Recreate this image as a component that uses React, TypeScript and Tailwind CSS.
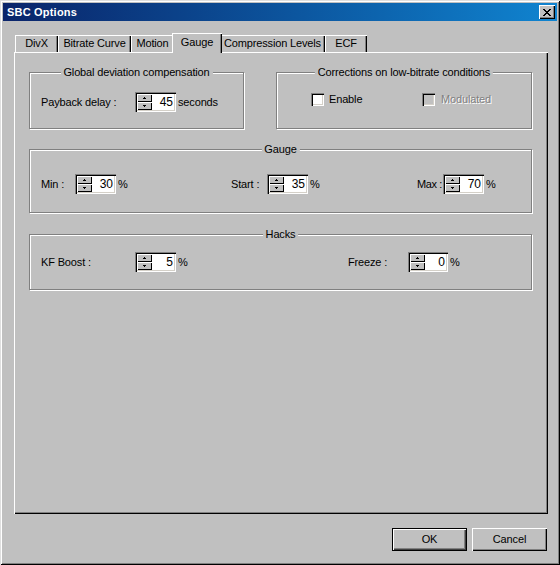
import React from 'react';

const face = "font-['Liberation_Sans',Arial,sans-serif]";

const xRows = ['11000011', '01100110', '00111100', '00011000', '00111100', '01100110', '11000011'];

function CloseGlyph() {
  return (
    <svg width="8" height="7" viewBox="0 0 8 7" shapeRendering="crispEdges" className="block">
      {xRows.map((row, y) =>
        row.split('').map((c, x) => (c === '1' ? <rect key={`${x}-${y}`} x={x} y={y} width="1" height="1" fill="#000" /> : null))
      )}
    </svg>
  );
}

function Arrow({ up }: { up?: boolean }) {
  return (
    <svg width="3" height="2" viewBox="0 0 3 2" shapeRendering="crispEdges" className="block">
      {up ? (
        <>
          <rect x="1" y="0" width="1" height="1" fill="#000" />
          <rect x="0" y="1" width="3" height="1" fill="#000" />
        </>
      ) : (
        <>
          <rect x="0" y="0" width="3" height="1" fill="#000" />
          <rect x="1" y="1" width="1" height="1" fill="#000" />
        </>
      )}
    </svg>
  );
}

function SpinButton({ up }: { up?: boolean }) {
  return (
    <div className="flex h-[8px] items-center justify-center bg-[#c0c0c0] shadow-[inset_1px_1px_0_#fff,inset_-1px_-1px_0_#000]">
      <Arrow up={up} />
    </div>
  );
}

function Spin({ value, narrow }: { value: string; narrow?: boolean }) {
  return (
    <div
      className={`flex h-[20px] shrink-0 ${narrow ? 'w-[40px]' : 'w-[41px]'} bg-white p-[2px] shadow-[inset_1px_1px_0_#808080,inset_2px_2px_0_#000,inset_-1px_-1px_0_#fff,inset_-2px_-2px_0_#d4d0c8]`}
    >
      <div className="flex w-[15px] flex-col">
        <SpinButton up />
        <SpinButton />
      </div>
      <div className="flex-1 pr-[1px] text-right text-[12px] leading-[16px] tracking-normal">{value}</div>
    </div>
  );
}

function Check({ disabled }: { disabled?: boolean }) {
  return (
    <div
      className={`h-[13px] w-[13px] shrink-0 ${disabled ? 'bg-[#c0c0c0]' : 'bg-white'} shadow-[inset_1px_1px_0_#808080,inset_2px_2px_0_#000,inset_-1px_-1px_0_#fff,inset_-2px_-2px_0_#d4d0c8]`}
    />
  );
}

function Group({ title, className, children }: { title: string; className: string; children: React.ReactNode }) {
  return (
    <div className={`relative border border-[#808080] shadow-[inset_1px_1px_0_#fff,1px_1px_0_#fff] ${className}`}>
      <span className="absolute left-1/2 top-[-7px] -translate-x-1/2 whitespace-nowrap bg-[#c0c0c0] px-[3px] leading-[13px]">
        {title}
      </span>
      {children}
    </div>
  );
}

const tabs = [
  { label: 'DivX', w: 'w-[43px]' },
  { label: 'Bitrate Curve', w: 'w-[73px]' },
  { label: 'Motion', w: 'w-[43px]' },
  { label: 'Gauge', w: 'w-[50px]', active: true },
  { label: 'Compression Levels', w: 'w-[105px]' },
  { label: 'ECF', w: 'w-[42px]' },
];

export default function App() {
  return (
    <div
      className={`${face} h-[565px] w-[560px] bg-[#c0c0c0] pt-[3px] text-[11px] tracking-[-0.15px] text-black shadow-[inset_1px_1px_0_#dfdfdf,inset_-1px_-1px_0_#000,inset_2px_2px_0_#fff,inset_-2px_-2px_0_#808080]`}
    >
      {/* Title bar */}
      <div className="mx-[3px] flex h-[18px] items-center bg-linear-to-r from-[#0a246a] to-[#1084d0] pl-[4px] pr-[2px]">
        <span className="text-[11px] font-bold tracking-[0.2px] text-white">SBC Options</span>
        <div className="ml-auto flex h-[14px] w-[16px] items-center justify-center bg-[#c0c0c0] shadow-[inset_1px_1px_0_#fff,inset_-1px_-1px_0_#000,inset_-2px_-2px_0_#808080]">
          <CloseGlyph />
        </div>
      </div>

      {/* Tabs */}
      <div className="ml-[15px] mt-[12px] flex h-[19px] items-end whitespace-nowrap">
        {tabs.map((t) =>
          t.active ? (
            <div
              key={t.label}
              className={`relative z-10 -mx-[2px] mb-[-1px] flex h-[20px] ${t.w} items-center justify-center bg-[#c0c0c0] pb-[1px] shadow-[inset_1px_0_0_#fff,inset_0_1px_0_#fff,inset_-1px_0_0_#000,inset_-2px_0_0_#808080]`}
            >
              {t.label}
            </div>
          ) : (
            <div
              key={t.label}
              className={`flex h-[17px] ${t.w} items-center justify-center leading-[13px] shadow-[inset_1px_0_0_#fff,inset_0_1px_0_#fff,inset_-1px_0_0_#000,inset_-2px_0_0_#808080]`}
            >
              {t.label}
            </div>
          )
        )}
      </div>

      {/* Tab panel */}
      <div className="ml-[14px] h-[462px] w-[534px] whitespace-nowrap pl-[15px] pt-[20px] shadow-[inset_1px_1px_0_#fff,inset_-1px_-1px_0_#000,inset_-2px_-2px_0_#808080]">
        <div className="flex gap-[32px]">
          <Group title="Global deviation compensation" className="h-[57px] w-[215px] pl-[11px] pt-[19px]">
            <div className="flex h-[20px] items-center">
              <span className="w-[94px] shrink-0">Payback delay :</span>
              <Spin value="45" />
              <span className="ml-[2px]">seconds</span>
            </div>
          </Group>
          <Group title="Corrections on low-bitrate conditions" className="h-[57px] w-[256px] pl-[34px] pt-[20px]">
            <div className="flex h-[13px] items-center">
              <div className="flex w-[111px] items-center">
                <Check />
                <span className="ml-[5px]">Enable</span>
              </div>
              <div className="flex items-center">
                <Check disabled />
                <span className="ml-[6px] text-[#808080] [text-shadow:1px_1px_0_#fff]">Modulated</span>
              </div>
            </div>
          </Group>
        </div>

        <Group title="Gauge" className="mt-[20px] h-[64px] w-[503px] pl-[11px] pt-[24px]">
          <div className="flex h-[20px] items-center">
            <div className="flex w-[190px] items-center">
              <span className="w-[34px] shrink-0">Min :</span>
              <Spin value="30" />
              <span className="ml-[2px]">%</span>
            </div>
            <div className="flex w-[186px] items-center">
              <span className="w-[36px] shrink-0">Start :</span>
              <Spin value="35" />
              <span className="ml-[2px]">%</span>
            </div>
            <div className="flex items-center">
              <span className="w-[26px] shrink-0 tracking-[-0.4px]">Max :</span>
              <Spin value="70" />
              <span className="ml-[2px]">%</span>
            </div>
          </div>
        </Group>

        <Group title="Hacks" className="mt-[21px] h-[56px] w-[503px] pl-[11px] pt-[17px]">
          <div className="flex h-[20px] items-center">
            <div className="flex w-[307px] items-center">
              <span className="w-[94px] shrink-0">KF Boost :</span>
              <Spin value="5" />
              <span className="ml-[2px]">%</span>
            </div>
            <div className="flex items-center">
              <span className="w-[60px] shrink-0">Freeze :</span>
              <Spin value="0" narrow />
              <span className="ml-[2px]">%</span>
            </div>
          </div>
        </Group>
      </div>

      {/* Buttons */}
      <div className="mt-[14px] flex justify-end gap-[5px] pr-[13px]">
        <button className="flex h-[23px] w-[75px] items-center justify-center border border-black bg-[#c0c0c0] shadow-[inset_1px_1px_0_#fff,inset_-1px_-1px_0_#404040,inset_-2px_-2px_0_#808080]">
          OK
        </button>
        <button className="flex h-[23px] w-[75px] items-center justify-center bg-[#c0c0c0] shadow-[inset_1px_1px_0_#fff,inset_-1px_-1px_0_#000,inset_-2px_-2px_0_#808080]">
          Cancel
        </button>
      </div>
    </div>
  );
}
